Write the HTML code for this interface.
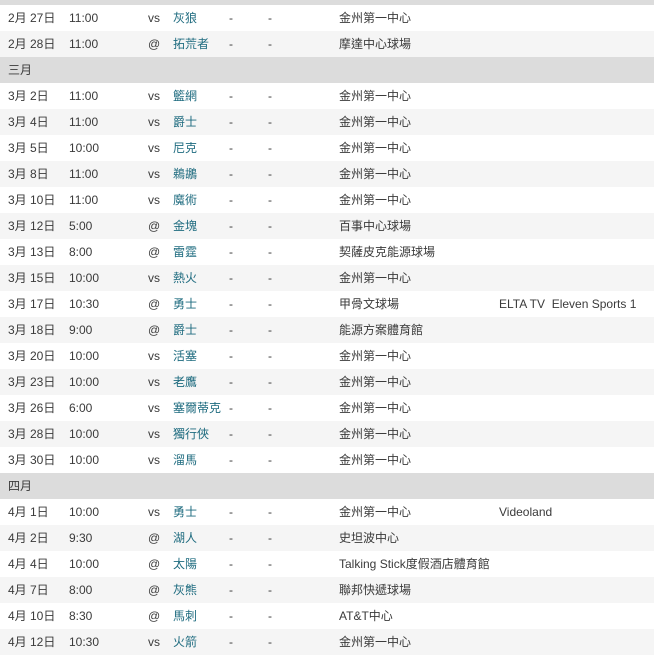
<!DOCTYPE html>
<html><head><meta charset="utf-8"><style>
body{margin:0;width:654px;height:654px;overflow:hidden;background:#fff;font-family:"Liberation Sans","Noto Sans CJK TC",sans-serif;font-size:12px;color:#3a3a3a}
.r{position:relative;height:26px;line-height:26px}
.g{background:#f5f5f5}
.h{background:#dcdcdc;padding-left:8px}
.r span{position:absolute;top:0;white-space:nowrap}
.t{color:#1e6b7f}
</style></head><body>
<div class="h" style="height:5px"></div>
<div id="c"></div>
<script>
const rows=[
["2月 27日","11:00","vs","灰狼","金州第一中心",""],
["2月 28日","11:00","@","拓荒者","摩達中心球場",""],
"三月",
["3月 2日","11:00","vs","籃網","金州第一中心",""],
["3月 4日","11:00","vs","爵士","金州第一中心",""],
["3月 5日","10:00","vs","尼克","金州第一中心",""],
["3月 8日","11:00","vs","鵜鶘","金州第一中心",""],
["3月 10日","11:00","vs","魔術","金州第一中心",""],
["3月 12日","5:00","@","金塊","百事中心球場",""],
["3月 13日","8:00","@","雷霆","契薩皮克能源球場",""],
["3月 15日","10:00","vs","熱火","金州第一中心",""],
["3月 17日","10:30","@","勇士","甲骨文球場","ELTA TV&nbsp; Eleven Sports 1"],
["3月 18日","9:00","@","爵士","能源方案體育館",""],
["3月 20日","10:00","vs","活塞","金州第一中心",""],
["3月 23日","10:00","vs","老鷹","金州第一中心",""],
["3月 26日","6:00","vs","塞爾蒂克","金州第一中心",""],
["3月 28日","10:00","vs","獨行俠","金州第一中心",""],
["3月 30日","10:00","vs","溜馬","金州第一中心",""],
"四月",
["4月 1日","10:00","vs","勇士","金州第一中心","Videoland"],
["4月 2日","9:30","@","湖人","史坦波中心",""],
["4月 4日","10:00","@","太陽","Talking Stick度假酒店體育館",""],
["4月 7日","8:00","@","灰熊","聯邦快遞球場",""],
["4月 10日","8:30","@","馬刺","AT&amp;T中心",""],
["4月 12日","10:30","vs","火箭","金州第一中心",""]];
let h="",i=0;
for(const r of rows){
if(typeof r==="string"){h+=`<div class="r h">${r}</div>`;i=0;continue;}
h+=`<div class="r ${i%2?'g':''}"><span style="left:8px">${r[0]}</span><span style="left:69px">${r[1]}</span><span style="left:148px">${r[2]}</span><span class="t" style="left:173px">${r[3]}</span><span style="left:229px">-</span><span style="left:268px">-</span><span style="left:339px">${r[4]}</span><span style="left:499px">${r[5]}</span></div>`;i++;}
document.getElementById("c").innerHTML=h;
</script>
</body></html>
